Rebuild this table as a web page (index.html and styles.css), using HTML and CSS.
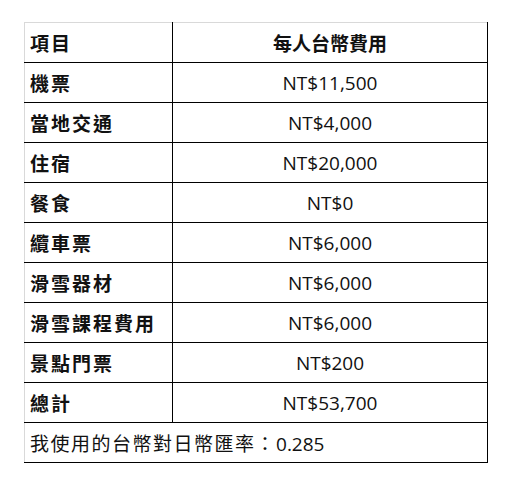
FILE: index.html
```html
<!DOCTYPE html>
<html lang="zh-Hant">
<head>
<meta charset="utf-8">
<link rel="stylesheet" href="styles.css">
</head>
<body>
<div class="page">
  <table class="cost">
    <tr class="first">
      <th class="label">項目</th>
      <th class="value">每人台幣費用</th>
    </tr>
    <tr><td class="label">機票</td><td class="value">NT$11,500</td></tr>
    <tr><td class="label">當地交通</td><td class="value">NT$4,000</td></tr>
    <tr><td class="label">住宿</td><td class="value">NT$20,000</td></tr>
    <tr><td class="label">餐食</td><td class="value">NT$0</td></tr>
    <tr><td class="label">纜車票</td><td class="value">NT$6,000</td></tr>
    <tr><td class="label">滑雪器材</td><td class="value">NT$6,000</td></tr>
    <tr><td class="label">滑雪課程費用</td><td class="value">NT$6,000</td></tr>
    <tr><td class="label">景點門票</td><td class="value">NT$200</td></tr>
    <tr><td class="label">總計</td><td class="value">NT$53,700</td></tr>
    <tr><td class="note" colspan="2"><span class="cjk">我使用的台幣對日幣匯率：</span>0.285</td></tr>
  </table>
</div>
</body>
</html>
```

FILE: styles.css
```css
html, body {
  margin: 0;
  padding: 0;
  background: #fff;
}
.page {
  padding: 22px 0 0 24px;
}
.cost {
  border-collapse: collapse;
  width: 464px;
  table-layout: fixed;
  font-family: "Open Sans", "Noto Sans CJK TC", sans-serif;
  color: #111;
}
.cost th, .cost td {
  border: 1px solid #000;
  height: 39px;
  padding: 0;
  font-size: 19px;
  vertical-align: middle;
}
.cost .label {
  width: 142px;
  text-align: left;
  padding-left: 5px;
  font-family: "Noto Sans CJK TC", sans-serif;
  font-weight: 600;
  letter-spacing: 2px;
  border-left-color: #d9d9d9;
}
.cost .value {
  text-align: center;
  font-weight: normal;
}
.cost th.value {
  font-family: "Noto Sans CJK TC", sans-serif;
  font-weight: 600;
}
.cost tr.first th {
  border-top-color: #d9d9d9;
}
.cost .note {
  text-align: left;
  padding-left: 5px;
  font-family: "Open Sans", "Noto Sans CJK TC", sans-serif;
  border-left-color: #d9d9d9;
}
.cost .note .cjk {
  font-family: "Noto Sans CJK TC", sans-serif;
  letter-spacing: 1.5px;
}
```
